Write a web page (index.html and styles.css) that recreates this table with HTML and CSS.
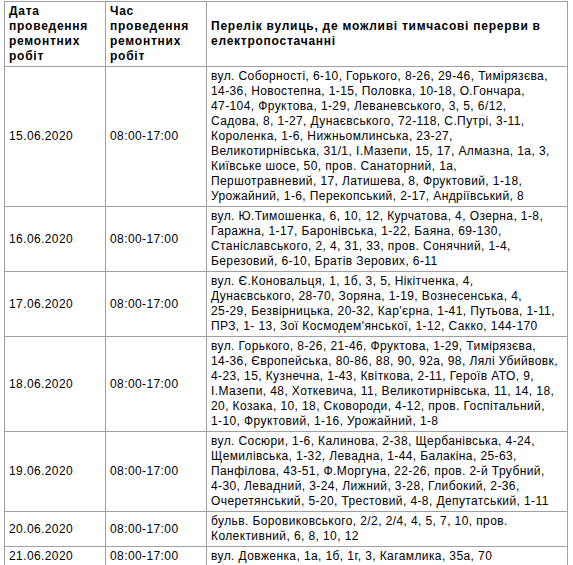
FILE: index.html
```html
<!DOCTYPE html>
<html lang="uk">
<head>
<meta charset="utf-8">
<title>Графік ремонтних робіт</title>
<link rel="stylesheet" href="styles.css">
</head>
<body>
<div class="page">
<table class="schedule">
  <colgroup>
    <col class="col-date">
    <col class="col-time">
    <col class="col-streets">
  </colgroup>
  <thead>
    <tr>
      <th>Дата<br>проведення<br>ремонтних<br>робіт</th>
      <th>Час<br>проведення<br>ремонтних<br>робіт</th>
      <th>Перелік вулиць, де можливі тимчасові перерви в<br>електропостачанні</th>
    </tr>
  </thead>
  <tbody>
    <tr>
      <td class="mid">15.06.2020</td>
      <td class="mid">08:00-17:00</td>
      <td>вул. Соборності, 6-10, Горького, 8-26, 29-46, Тимірязєва,<br>14-36, Новостепна, 1-15, Половка, 10-18, О.Гончара,<br>47-104, Фруктова, 1-29, Леваневського, 3, 5, 6/12,<br>Садова, 8, 1-27, Дунаєвського, 72-118, С.Путрі, 3-11,<br>Короленка, 1-6, Нижньомлинська, 23-27,<br>Великотирнівська, 31/1, І.Мазепи, 15, 17, Алмазна, 1а, 3,<br>Київське шосе, 50, пров. Санаторний, 1а,<br>Першотравневий, 17, Латишева, 8, Фруктовий, 1-18,<br>Урожайний, 1-6, Перекопський, 2-17, Андріївський, 8</td>
    </tr>
    <tr>
      <td class="mid">16.06.2020</td>
      <td class="mid">08:00-17:00</td>
      <td>вул. Ю.Тимошенка, 6, 10, 12, Курчатова, 4, Озерна, 1-8,<br>Гаражна, 1-17, Баронівська, 1-22, Баяна, 69-130,<br>Станіславського, 2, 4, 31, 33, пров. Сонячний, 1-4,<br>Березовий, 6-10, Братів Зерових, 6-11</td>
    </tr>
    <tr>
      <td class="mid">17.06.2020</td>
      <td class="mid">08:00-17:00</td>
      <td>вул. Є.Коновальця, 1, 1б, 3, 5, Нікітченка, 4,<br>Дунаєвського, 28-70, Зоряна, 1-19, Вознесенська, 4,<br>25-29, Безвірницька, 20-32, Кар'єрна, 1-41, Путьова, 1-11,<br>ПРЗ, 1- 13, Зої Космодем'янської, 1-12, Сакко, 144-170</td>
    </tr>
    <tr>
      <td class="mid">18.06.2020</td>
      <td class="mid">08:00-17:00</td>
      <td>вул. Горького, 8-26, 21-46, Фруктова, 1-29, Тимірязєва,<br>14-36, Європейська, 80-86, 88, 90, 92а, 98, Лялі Убийвовк,<br>4-23, 15, Кузнечна, 1-43, Квіткова, 2-11, Героїв АТО, 9,<br>І.Мазепи, 48, Хоткевича, 11, Великотирнівська, 11, 14, 18,<br>20, Козака, 10, 18, Сковороди, 4-12, пров. Госпітальний,<br>1-10, Фруктовий, 1-16, Урожайний, 1-8</td>
    </tr>
    <tr>
      <td class="mid">19.06.2020</td>
      <td class="mid">08:00-17:00</td>
      <td>вул. Сосюри, 1-6, Калинова, 2-38, Щербанівська, 4-24,<br>Щемилівська, 1-32, Левадна, 1-44, Балакіна, 25-63,<br>Панфілова, 43-51, Ф.Моргуна, 22-26, пров. 2-й Трубний,<br>4-30, Левадний, 3-24, Лижний, 3-28, Глибокий, 2-36,<br>Очеретянський, 5-20, Трестовий, 4-8, Депутатський, 1-11</td>
    </tr>
    <tr>
      <td class="mid">20.06.2020</td>
      <td class="mid">08:00-17:00</td>
      <td>бульв. Боровиковського, 2/2, 2/4, 4, 5, 7, 10, пров.<br>Колективний, 6, 8, 10, 12</td>
    </tr>
    <tr>
      <td class="mid">21.06.2020</td>
      <td class="mid">08:00-17:00</td>
      <td>вул. Довженка, 1а, 1б, 1г, 3, Кагамлика, 35а, 70</td>
    </tr>
  </tbody>
</table>
</div>
</body>
</html>
```

FILE: styles.css
```css
html, body {
  margin: 0;
  padding: 0;
  background: #ffffff;
}

.page {
  padding: 1px 0 0 4px;
}

.schedule {
  border-collapse: collapse;
  table-layout: fixed;
  width: 563px;
  font-family: "Liberation Sans", Arial, sans-serif;
  font-size: 12px;
  line-height: 15px;
  color: #000000;
}

.col-date { width: 101px; }
.col-time { width: 101px; }
.col-streets { width: 361px; }

.schedule th,
.schedule td {
  border: 1px solid #a0a0a0;
  padding: 2px 4px;
  text-align: left;
  white-space: nowrap;
}

.schedule th {
  font-weight: bold;
  vertical-align: middle;
  letter-spacing: 0.75px;
}

.schedule td {
  vertical-align: top;
  letter-spacing: 0.4px;
}

.schedule td.mid {
  vertical-align: middle;
}
```
